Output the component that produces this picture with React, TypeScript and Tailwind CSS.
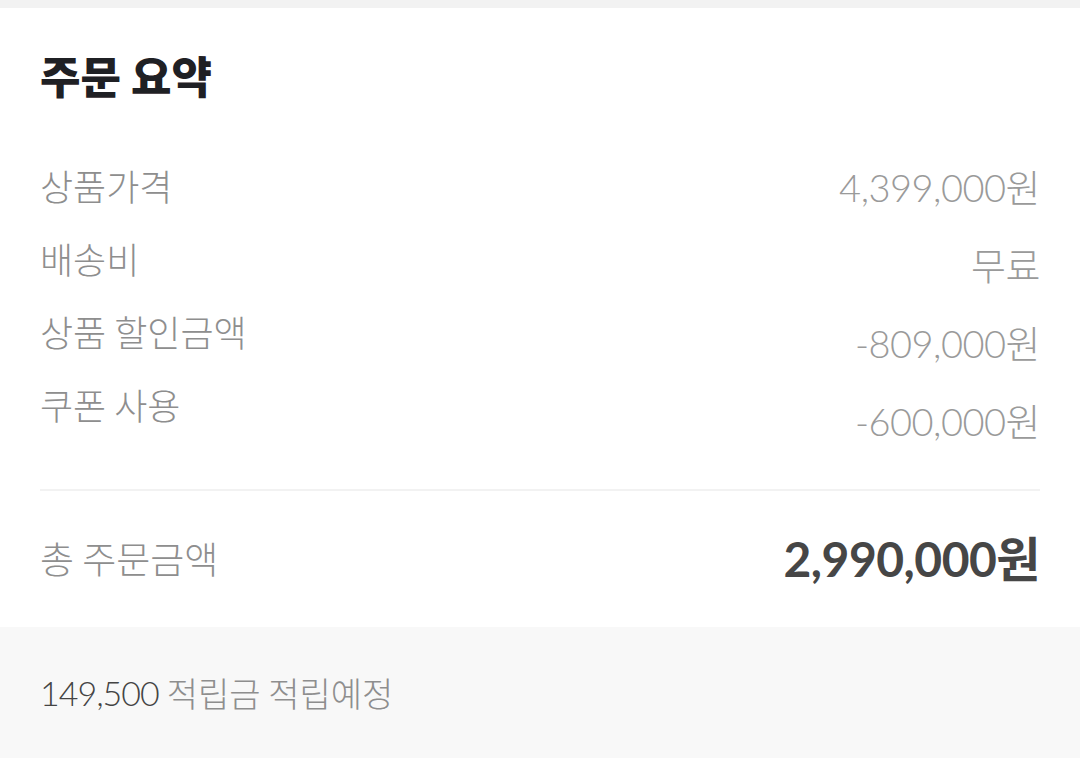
import React from 'react';

const rows = [
  { label: '상품가격', value: '4,399,000원' },
  { label: '배송비', value: '무료' },
  { label: '상품 할인금액', value: '-809,000원' },
  { label: '쿠폰 사용', value: '-600,000원' },
];

const kr = "font-['Noto_Sans_CJK_KR',sans-serif]";
const num = "font-['Lato','Noto_Sans_CJK_KR',sans-serif]";

export default function App() {
  return (
    <div className={`min-h-screen bg-[#f8f8f8] ${kr}`}>
      <div className="h-2 bg-[#f2f2f2]" />

      {/* Summary */}
      <section className="bg-white px-10 pt-[42px]">
        <h1 className="text-[44px] leading-[50px] font-black text-[#1f2024]">주문 요약</h1>

        <div className="flex justify-between mt-[48px]">
          <div className="flex flex-col">
            {rows.map((r) => (
              <div key={r.label} className="h-[73px] flex items-center text-[36px] font-light text-[#8e8e8e]">
                {r.label}
              </div>
            ))}
          </div>
          <div className="flex flex-col items-end">
            {rows.map((r) => (
              <div
                key={r.label}
                className={`h-[78px] flex items-center text-[38px] font-light tracking-[-0.5px] text-[#9a9a9a] ${num}`}
              >
                {r.value}
              </div>
            ))}
          </div>
        </div>

        <div className="mt-[29px] h-[2px] bg-[#f2f2f2]" />

        <div className="h-[136px] flex items-center justify-between">
          <span className="text-[37px] font-light text-[#8e8e8e]">총 주문금액</span>
          <span className={`text-[48px] font-bold tracking-[-0.5px] text-[#464646] ${num}`}>2,990,000원</span>
        </div>
      </section>

      {/* Points */}
      <div className="h-[131px] px-10 flex items-center text-[34px]">
        <span className={`font-light text-[#444] tracking-[-1px] ${num}`}>149,500</span>
        <span className="ml-2 font-light text-[#8e8e8e]">적립금 적립예정</span>
      </div>
    </div>
  );
}
